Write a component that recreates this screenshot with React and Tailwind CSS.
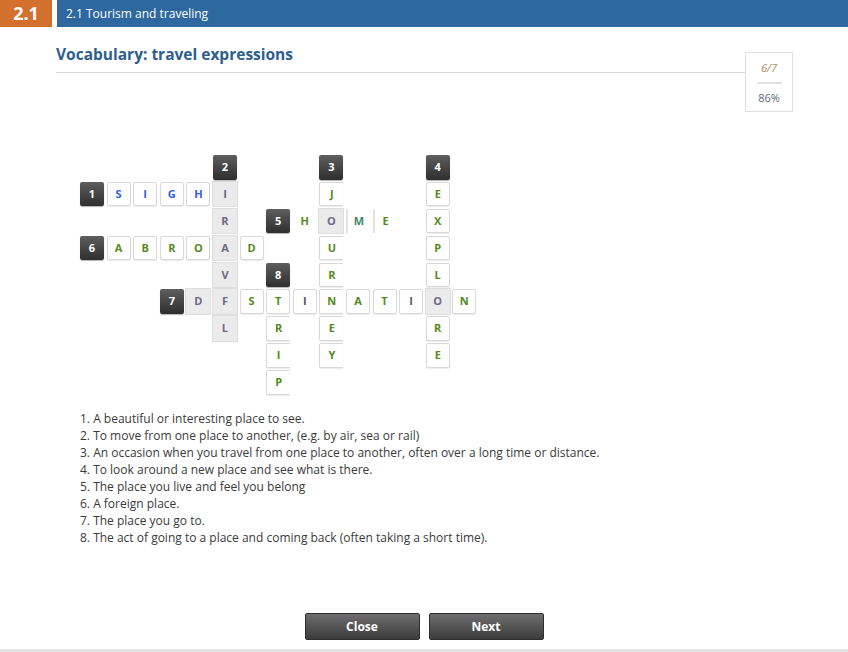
import React from "react";

const D = (n) => ({ t: "dark", v: n });
const W = (v, c = "g", nr = false) => ({ t: "white", v, c, nr });
const G = (v) => ({ t: "gray", v });

// 9 rows x 15 cols
const grid = [];
for (let r = 0; r < 9; r++) grid.push(Array(15).fill(null));
const put = (r, c, cell) => (grid[r][c] = cell);

put(0, 5, D("2")); put(0, 9, D("3")); put(0, 13, D("4"));
put(1, 0, D("1")); put(1, 1, W("S", "b")); put(1, 2, W("I", "b")); put(1, 3, W("G", "b")); put(1, 4, W("H", "b")); put(1, 5, G("I")); put(1, 9, W("J", "g", true)); put(1, 13, W("E"));
put(2, 5, G("R")); put(2, 7, D("5")); put(2, 8, { t: "plain", v: "H" }); put(2, 9, G("O")); put(2, 10, { t: "left", v: "M", c: "t" }); put(2, 11, { t: "left", v: "E" }); put(2, 13, W("X"));
put(3, 0, D("6")); put(3, 1, W("A")); put(3, 2, W("B")); put(3, 3, W("R")); put(3, 4, W("O")); put(3, 5, G("A")); put(3, 6, W("D")); put(3, 9, W("U", "g", true)); put(3, 13, W("P"));
put(4, 5, G("V")); put(4, 7, D("8")); put(4, 9, W("R", "g", true)); put(4, 13, W("L"));
put(5, 3, D("7")); put(5, 4, G("D")); put(5, 5, G("F")); put(5, 6, W("S")); put(5, 7, W("T")); put(5, 8, W("I", "k")); put(5, 9, W("N", "g", true)); put(5, 10, W("A")); put(5, 11, W("T")); put(5, 12, W("I", "k")); put(5, 13, G("O")); put(5, 14, W("N"));
put(6, 5, G("L")); put(6, 7, W("R", "g", true)); put(6, 9, W("E", "g", true)); put(6, 13, W("R"));
put(7, 7, W("I", "g", true)); put(7, 9, W("Y", "g", true)); put(7, 13, W("E"));
put(8, 7, W("P", "g", true));

const colorCls = {
  g: "text-[#548a1c]",
  b: "text-[#2f5fe0]",
  k: "text-[#5a5a5a]",
  t: "text-[#3f8a6a]",
};

function Cell({ cell }) {
  if (!cell) return <div />;
  if (cell.t === "dark")
    return (
      <div className="flex items-center justify-center rounded-[2px] bg-gradient-to-b from-[#5e5e5e] to-[#2f2f2f] text-[11px] font-bold text-white shadow-[0_1px_1px_rgba(0,0,0,0.3)]">
        {cell.v}
      </div>
    );
  if (cell.t === "gray")
    return (
      <div className="-mx-[1px] -my-[1px] flex items-center justify-center border border-[#dedede] bg-[#ebebeb] text-[11px] font-bold text-[#6c6a86]">
        {cell.v}
      </div>
    );
  if (cell.t === "plain")
    return (
      <div className="flex items-center justify-center bg-white text-[11px] font-bold text-[#548a1c]">
        {cell.v}
      </div>
    );
  if (cell.t === "left")
    return (
      <div className={`flex items-center justify-center border-l-2 border-[#e2e2e2] bg-white text-[11px] font-bold ${colorCls[cell.c || "g"]}`}>
        {cell.v}
      </div>
    );
  return (
    <div
      className={`flex items-center justify-center rounded-[2px] border border-[#d9d9d9] bg-white text-[11px] font-bold shadow-[0_1px_1px_rgba(0,0,0,0.08)] ${colorCls[cell.c]} ${cell.nr ? "rounded-r-none border-r-0" : ""}`}
    >
      {cell.v}
    </div>
  );
}

const clues = [
  "1. A beautiful or interesting place to see.",
  "2. To move from one place to another, (e.g. by air, sea or rail)",
  "3. An occasion when you travel from one place to another, often over a long time or distance.",
  "4. To look around a new place and see what is there.",
  "5. The place you live and feel you belong",
  "6. A foreign place.",
  "7. The place you go to.",
  "8. The act of going to a place and coming back (often taking a short time).",
];

export default function App() {
  return (
    <div className="flex h-[652px] w-[848px] flex-col overflow-hidden bg-white font-['Open_Sans',_'Liberation_Sans',_sans-serif]">
      {/* Header */}
      <div className="flex h-[27px] shrink-0 gap-[5px]">
        <div className="flex w-[52px] items-center justify-center bg-[#d4702e] text-[18px] font-bold text-white">
          2.1
        </div>
        <div className="flex flex-1 items-center bg-[#2e68a0] px-[9px] text-[12px] text-white">
          2.1 Tourism and traveling
        </div>
      </div>

      {/* Title row */}
      <div className="mt-[16px] flex items-start pl-[56px] pr-[55px]">
        <div className="h-[30px] flex-1 border-b border-[#dcdcdc] pt-[1px]">
          <div className="text-[15.5px] font-bold leading-[20px] text-[#2d5e8e]">
            Vocabulary: travel expressions
          </div>
        </div>
        <div className="mt-[9px] flex h-[60px] w-[48px] flex-col items-center border border-[#e0e0e0] bg-white">
          <div className="mt-[7px] text-[11px] italic leading-[16px] text-[#b08a5a]">6/7</div>
          <div className="mt-[6px] h-[2px] w-[25px] bg-[#e2e2e2]" />
          <div className="mt-[6px] text-[11px] leading-[16px] text-[#5a6878]">86%</div>
        </div>
      </div>

      {/* Crossword */}
      <div className="ml-[80px] mt-[43px] grid grid-cols-[repeat(15,24px)] grid-rows-[repeat(9,24.5px)] gap-x-[2.6px] gap-y-[2.4px]">
        {grid.map((row, r) =>
          row.map((cell, c) => <Cell key={`${r}-${c}`} cell={cell} />)
        )}
      </div>

      {/* Clues */}
      <div className="ml-[80px] mt-[15px] text-[12px] leading-[17px] text-[#3a3a3a]">
        {clues.map((c) => (
          <div key={c}>{c}</div>
        ))}
      </div>

      <div className="flex-1" />

      {/* Buttons */}
      <div className="flex justify-center gap-[9px]">
        <button className="h-[27px] w-[115px] rounded-[2px] border border-[#2e2e2e] bg-gradient-to-b from-[#6e6e6e] to-[#3c3c3c] text-[12px] font-bold text-white">
          Close
        </button>
        <button className="h-[27px] w-[115px] rounded-[2px] border border-[#2e2e2e] bg-gradient-to-b from-[#6e6e6e] to-[#3c3c3c] text-[12px] font-bold text-white">
          Next
        </button>
      </div>
      <div className="mt-[9px] h-[3px] shrink-0 bg-[#e4e4e4]" />
    </div>
  );
}
